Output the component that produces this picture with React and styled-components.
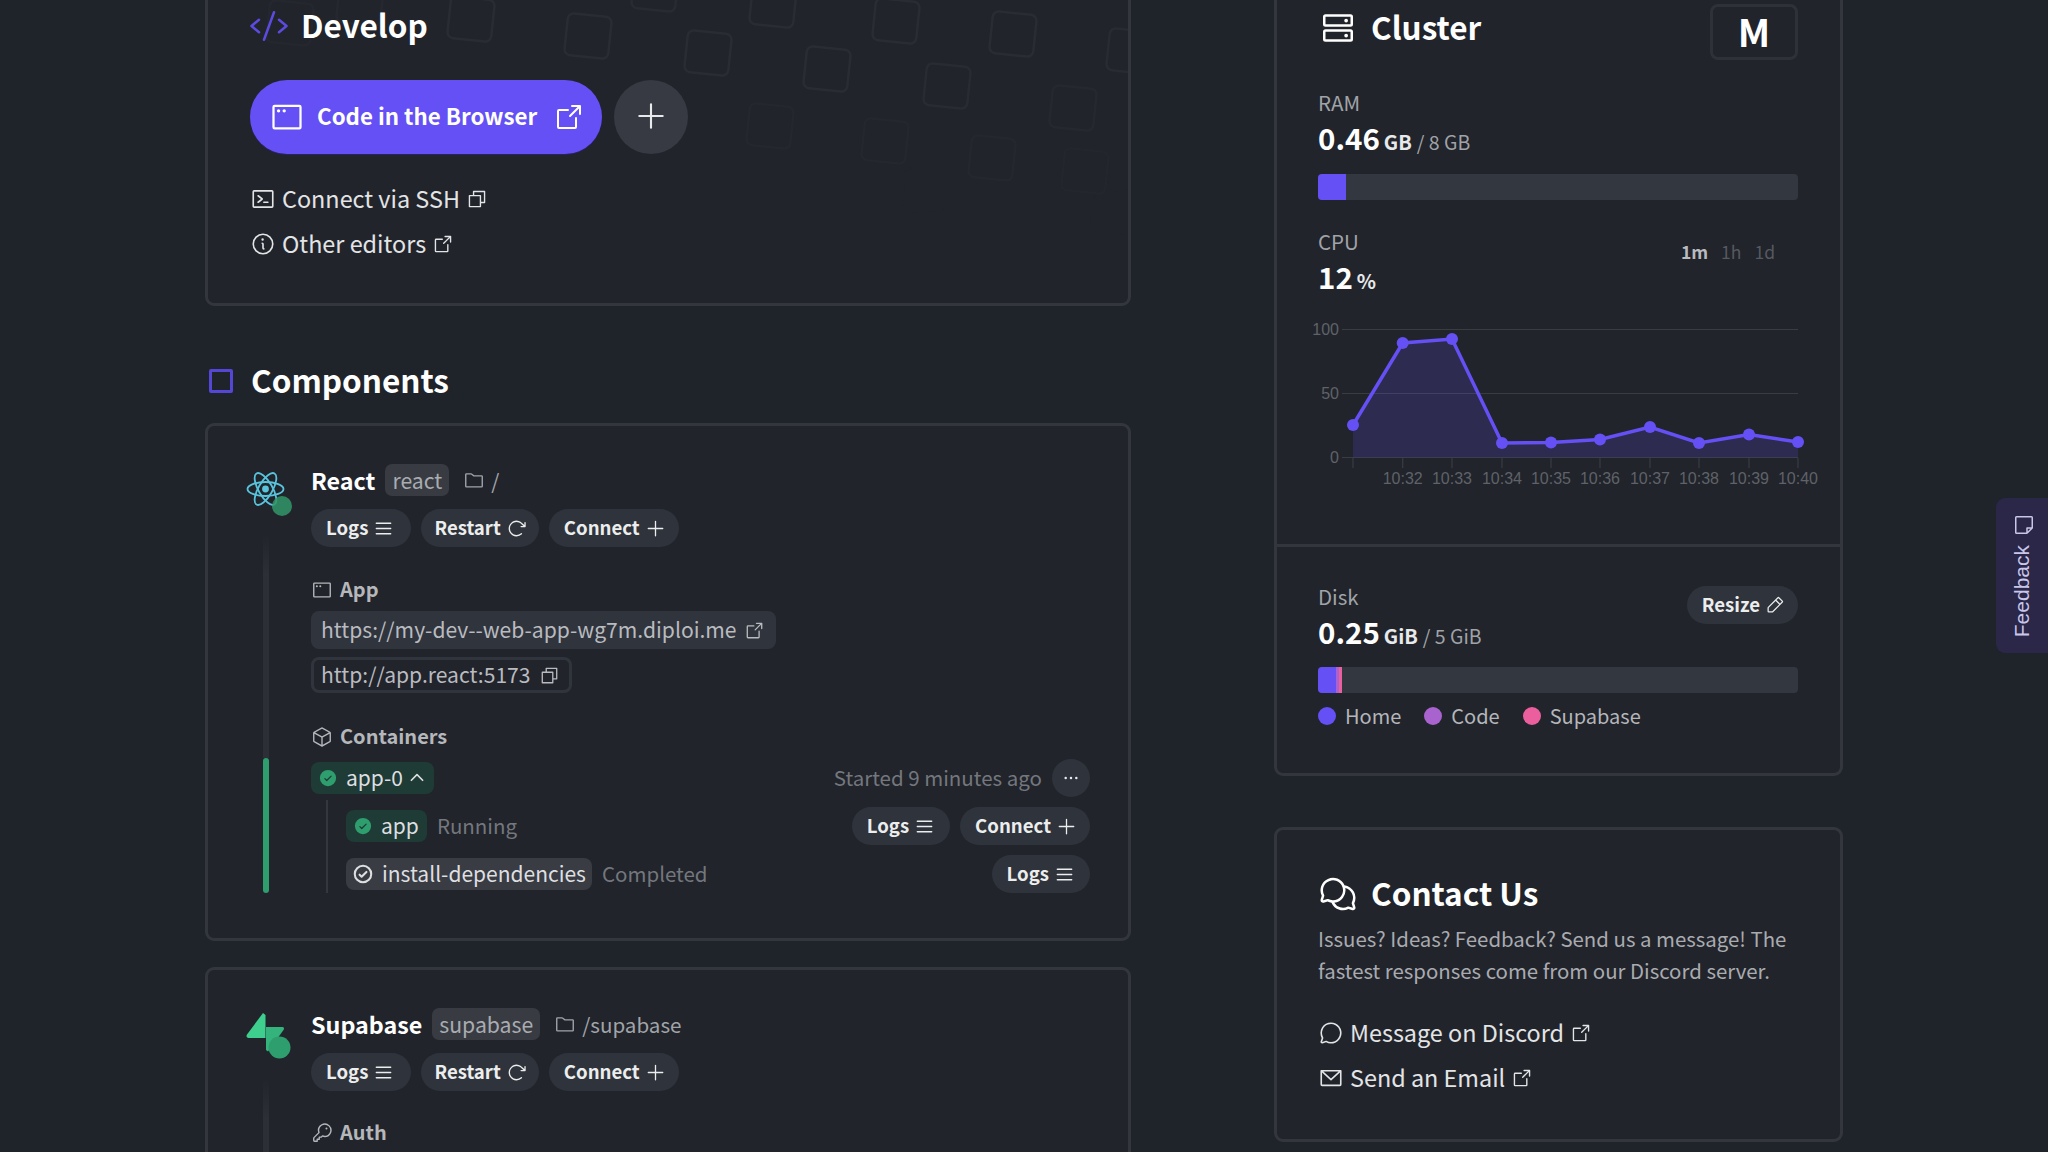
import React from "react";
import styled, { createGlobalStyle } from "styled-components";
import {
  PiCode,
  PiAppWindow,
  PiArrowSquareOut,
  PiPlus,
  PiTerminalWindow,
  PiCopy,
  PiInfo,
  PiFolderSimple,
  PiList,
  PiArrowClockwise,
  PiCube,
  PiCheckCircleFill,
  PiCheckCircleBold,
  PiCaretUpBold,
  PiDotsThreeBold,
  PiKey,
  PiHardDrives,
  PiPencilSimple,
  PiChatsCircle,
  PiChatCircle,
  PiEnvelopeSimple,
  PiNoteBlank,
} from "react-icons/pi";

const GlobalStyle = createGlobalStyle`
  html, body {
    margin: 0;
    height: 100%;
    overflow: hidden;
    background: #1f232a;
  }
  body {
    color: #fff;
    font-family: "Noto Sans CJK SC", "Noto Sans", sans-serif;
  }
  * {
    box-sizing: border-box;
  }
`;

const Viewport = styled.div`
  height: 1152px;
  overflow: hidden;
`;

const Page = styled.div`
  display: flex;
  gap: 143px;
  margin-top: -60px;
  padding-left: 205px;
`;

const LeftColumn = styled.div`
  width: 926px;
  flex: none;
`;

const RightColumn = styled.div`
  width: 569px;
  flex: none;
`;

const Card = styled.section`
  background: #21242b;
  border: 3px solid #33363d;
  border-radius: 9px;
  position: relative;
`;

const DevelopCard = styled(Card)`
  overflow: hidden;
  padding: 63px 42px 42px;
`;

const Pattern = styled.svg`
  position: absolute;
  left: 0;
  top: 57px;
  pointer-events: none;
`;

const CardTitle = styled.h2`
  display: flex;
  align-items: center;
  gap: ${(p) => p.$gap || 12}px;
  height: 40px;
  margin: ${(p) => p.$top || 0}px 0 0;
  padding-bottom: 3px;
  font-size: 31.5px;
  font-weight: 700;
  line-height: 37px;
  position: relative;
  svg {
    flex: none;
    margin: 2px 0 0 ${(p) => p.$iconLeft ?? -1}px;
  }
`;

const ActionRow = styled.div`
  display: flex;
  gap: 12px;
  margin-top: 34px;
  position: relative;
`;

const PrimaryButton = styled.button`
  display: flex;
  align-items: center;
  width: 352px;
  height: 74px;
  padding: 0 17px 0 19px;
  border: 0;
  border-radius: 37px;
  background: #6450f5;
  box-shadow: 0 1px 0 #2a2363;
  color: #fff;
  font: 700 22.3px "Noto Sans CJK SC", sans-serif;
  span {
    flex: 1;
    text-align: left;
    margin: 0 0 5px 12px;
  }
`;

const RoundButton = styled.button`
  display: flex;
  align-items: center;
  justify-content: center;
  width: ${(p) => p.$size || 74}px;
  height: ${(p) => p.$size || 74}px;
  padding: 0 0 ${(p) => (p.$size ? 0 : 2)}px;
  border: 0;
  border-radius: 50%;
  background: ${(p) => p.$bg || "#373a42"};
  color: #e8e9eb;
`;

const LinkList = styled.div`
  display: flex;
  flex-direction: column;
  gap: 11px;
  margin-top: ${(p) => p.$top || 28}px;
  position: relative;
`;

const LinkRow = styled.a`
  display: flex;
  align-items: center;
  gap: 6px;
  height: 34px;
  padding-bottom: 2px;
  font-size: 23.4px;
  color: #e3e4e6;
  svg {
    flex: none;
    margin-top: 2px;
  }
`;

const SectionHeading = styled.h1`
  display: flex;
  align-items: center;
  gap: 18px;
  height: 40px;
  margin: 55px 0 22px 4px;
  font-size: 31.5px;
  font-weight: 700;
  span:last-child {
    margin-bottom: 5px;
  }
`;

const SquareMark = styled.i`
  width: 24px;
  height: 24px;
  border: 3px solid #5546d6;
  border-radius: 2px;
`;

const ComponentCard = styled(Card)`
  display: flex;
  margin-bottom: 26px;
  min-height: ${(p) => p.$minHeight || 0}px;
  padding: 38px 38px 45px 40px;
`;

const Rail = styled.div`
  display: flex;
  flex: none;
  flex-direction: column;
  width: 63px;
`;

const LogoBox = styled.div`
  position: relative;
  width: 44px;
  height: 46px;
  flex: none;
  margin-left: -2px;
`;

const StatusDot = styled.span`
  position: absolute;
  left: 26px;
  top: 32px;
  width: 20px;
  height: 20px;
  border-radius: 50%;
  background: rgba(49, 150, 104, 0.85);
`;

const RailLine = styled.div`
  flex: 1;
  width: 6px;
  margin: 24px 0 0 15px;
  background: linear-gradient(to bottom, #21242b, #2c2f36 40px);
`;

const RailActive = styled.div`
  height: 135px;
  width: 6px;
  margin-left: 15px;
  border-radius: 3px;
  background: #2f9e6e;
`;

const Body = styled.div`
  flex: 1;
  min-width: 0;
`;

const TitleRow = styled.div`
  display: flex;
  align-items: center;
  height: 32px;
`;

const ComponentName = styled.span`
  font-size: 23.3px;
  font-weight: 700;
  margin-right: 10px;
  margin-bottom: 1px;
`;

const NameTag = styled.span`
  display: flex;
  align-items: center;
  height: 32px;
  padding: 0 7px 1px;
  border-radius: 7px;
  background: #383b42;
  color: #a9acb1;
  font-size: 21.2px;
`;

const PathText = styled.span`
  display: flex;
  align-items: center;
  gap: 6px;
  margin-left: 14px;
  color: #a1a4a9;
  font-size: 20.6px;
  padding-bottom: 1px;
  svg {
    margin-top: 1px;
  }
`;

const ButtonRow = styled.div`
  display: flex;
  gap: 10px;
  margin-top: 13px;
`;

const PillButton = styled.button`
  display: flex;
  align-items: center;
  gap: 5px;
  height: 38px;
  margin-top: ${(p) => p.$top || 0}px;
  padding: 0 ${(p) => p.$right || 13}px 4px ${(p) => p.$left || 15}px;
  border: 0;
  border-radius: 20px;
  background: #2f333b;
  color: #eceded;
  font: 700 18.6px "Noto Sans CJK SC", sans-serif;
  svg {
    margin-top: 4px;
  }
`;

const GroupLabel = styled.div`
  display: flex;
  align-items: center;
  gap: 7px;
  height: 30px;
  margin-top: ${(p) => p.$top}px;
  padding-bottom: 3px;
  color: #b5b7bb;
  font-size: 20px;
  font-weight: 700;
  svg {
    margin-top: 3px;
  }
`;

const UrlChip = styled.a`
  display: flex;
  align-items: center;
  gap: ${(p) => (p.$outlined ? 8 : 7)}px;
  width: fit-content;
  margin-top: ${(p) => p.$top}px;
  height: ${(p) => (p.$outlined ? 36 : 38)}px;
  padding: 0 ${(p) => (p.$outlined ? 9 : 11)}px 2px ${(p) => (p.$outlined ? 7 : 10)}px;
  border: ${(p) => (p.$outlined ? "3px solid #30343c" : "0")};
  border-radius: 8px;
  background: ${(p) => (p.$outlined ? "transparent" : "#30343c")};
  color: #b9bbc0;
  font-size: 21.1px;
  svg {
    margin-top: 2px;
  }
`;

const ContainerRow = styled.div`
  display: flex;
  align-items: center;
  height: 38px;
  margin-top: ${(p) => p.$top}px;
`;

const StatusChip = styled.span`
  display: flex;
  align-items: center;
  gap: 8px;
  height: 32px;
  padding: 0 ${(p) => p.$pad || 8}px 2px ${(p) => p.$start || 7}px;
  border-radius: 8px;
  background: ${(p) => (p.$done ? "#393c43" : "#1f3b35")};
  color: #dedfe1;
  font-size: 21px;
  svg {
    flex: none;
    margin-top: 2px;
  }
  svg:nth-child(2) {
    margin-left: -3px;
  }
`;

const MutedText = styled.span`
  color: #74777d;
  font-size: 20.5px;
  margin-left: ${(p) => p.$left || 0}px;
  padding-bottom: 2px;
`;

const RowEnd = styled.div`
  display: flex;
  align-items: center;
  gap: ${(p) => p.$gap || 10}px;
  margin-left: auto;
`;

const StepList = styled.div`
  margin: 3px 0 0 15px;
  padding: 7px 0 0 18px;
  border-left: 2px solid #34373e;
`;

const ClusterCard = styled(Card)`
  margin-bottom: 51px;
`;

const ClusterTop = styled.div`
  padding: 61px 42px 54px 41px;
  border-bottom: 3px solid #33363d;
`;

const ClusterHeader = styled.div`
  display: flex;
  align-items: flex-start;
  justify-content: space-between;
  height: 56px;
`;

const SizeBox = styled.div`
  display: flex;
  align-items: center;
  justify-content: center;
  width: 88px;
  height: 56px;
  border: 3px solid #2e3138;
  border-radius: 8px;
  padding-bottom: 3px;
  font-size: 38px;
  font-weight: 700;
`;

const MetricLabel = styled.div`
  height: 28px;
  margin-top: ${(p) => p.$top || 0}px;
  color: #a0a3a8;
  font-size: 20.5px;
  line-height: 26px;
`;

const MetricValue = styled.div`
  display: flex;
  align-items: baseline;
  height: 36px;
  margin-top: 2px;
  color: #a0a3a8;
  font-size: 19.5px;
  line-height: 36px;
  b {
    color: #fff;
    font-size: 29.5px;
    font-weight: 700;
  }
  strong {
    color: #e8e9ea;
    font-size: 20px;
    font-weight: 700;
    margin: 0 5px 0 4px;
  }
`;

const Meter = styled.div`
  display: flex;
  height: 26px;
  margin-top: ${(p) => p.$top}px;
  overflow: hidden;
  border-radius: 4px;
  background: #33373f;
`;

const MeterFill = styled.div`
  background: ${(p) => p.$color};
`;

const CpuRow = styled.div`
  display: flex;
  justify-content: space-between;
`;

const RangeTabs = styled.div`
  display: flex;
  gap: 13px;
  margin: 51px 23px 0 0;
  height: 0;
  align-items: center;
`;

const RangeTab = styled.span`
  color: ${(p) => (p.$active ? "#b9bbbf" : "#565960")};
  font-size: 17.5px;
  font-weight: ${(p) => (p.$active ? 700 : 400)};
`;

const ChartSvg = styled.svg`
  display: block;
  margin: 6px 0 0 1px;
  overflow: visible;
`;

const ClusterDisk = styled.div`
  padding: 36px 42px 44px 41px;
`;

const DiskHeader = styled.div`
  display: flex;
  align-items: flex-start;
  justify-content: space-between;
`;

const Legend = styled.div`
  display: flex;
  gap: 23px;
  margin-top: 8px;
  height: 28px;
`;

const LegendItem = styled.span`
  display: flex;
  align-items: center;
  gap: 9px;
  color: #b4b6ba;
  font-size: 20px;
  &::before {
    content: "";
    width: 18px;
    height: 18px;
    margin-top: 2px;
    border-radius: 50%;
    background: ${(p) => p.$color};
  }
`;

const ContactCard = styled(Card)`
  padding: 44px 42px 44px 41px;
`;

const ContactText = styled.p`
  margin: 8px 0 0;
  color: #a9abb0;
  font-size: 20.4px;
  line-height: 32px;
`;

const FeedbackTab = styled.div`
  position: fixed;
  right: 0;
  top: 498px;
  display: flex;
  align-items: center;
  justify-content: center;
  gap: 8px;
  width: 52px;
  height: 155px;
  border-radius: 9px 0 0 9px;
  background: #2a2748;
  color: #c9c6ea;
  font: 21px "Liberation Sans", sans-serif;
  writing-mode: vertical-rl;
  span {
    transform: rotate(180deg);
  }
  svg {
    order: -1;
    margin-left: 4px;
  }
`;

const tiles = [
  [446, -2, 0.9], [563, 15, 0.9], [683, 32, 0.9], [802, 48, 0.9], [922, 65, 0.8], [1048, 87, 0.5],
  [748, -16, 0.9], [871, 0, 0.9], [988, 13, 0.9], [1105, 30, 0.8], [630, -32, 0.8], [335, -18, 0.5],
  [967, 137, 0.35], [1060, 150, 0.25], [860, 120, 0.3], [745, 105, 0.3], [620, 90, 0.25],
  [1090, 190, 0.12], [900, 170, 0.12], [265, 2, 0.35],
];

const DevelopPattern = () => (
  <Pattern width="926" height="300" viewBox="205 0 926 300">
    {tiles.map(([x, y, o]) => (
      <rect
        key={`${x}-${y}`}
        x={x}
        y={y}
        width="44"
        height="42"
        rx="6"
        fill="none"
        stroke="#2a2d34"
        strokeWidth="2.5"
        opacity={o}
        transform={`rotate(6 ${x + 22} ${y + 21})`}
      />
    ))}
  </Pattern>
);

const ReactLogo = () => (
  <svg width="40" height="36" viewBox="0 0 40 36" fill="none" stroke="#58c4dc" strokeWidth="1.8" style={{ display: "block", marginTop: 7 }}>
    <circle cx="19.5" cy="18" r="3.4" fill="#58c4dc" stroke="none" />
    <ellipse cx="19.5" cy="18" rx="18" ry="7" />
    <ellipse cx="19.5" cy="18" rx="18" ry="7" transform="rotate(60 19.5 18)" />
    <ellipse cx="19.5" cy="18" rx="18" ry="7" transform="rotate(120 19.5 18)" />
  </svg>
);

const SupabaseLogo = () => (
  <svg width="46" height="48" viewBox="0 0 46 48" style={{ display: "block", marginTop: 4 }}>
    <path d="M17 1 19.5 3V26H2.5C.5 26 0 24 1 22.5Z" fill="#3ecf8e" />
    <path d="M20 15H36.5C38 15 38.5 16.5 37.5 18L22 39.5 20 38Z" fill="#35b37d" />
    <circle cx="33.5" cy="35.5" r="11" fill="#2f9e6e" />
  </svg>
);

const Actions = () => (
  <ButtonRow>
    <PillButton $right={17}>Logs <PiList size={21} /></PillButton>
    <PillButton $left={13} $right={12}>Restart <PiArrowClockwise size={21} /></PillButton>
    <PillButton>Connect <PiPlus size={21} /></PillButton>
  </ButtonRow>
);

const points = [
  [1353, 425], [1402.7, 343], [1452, 339], [1502, 443], [1551, 442.5],
  [1600, 439.5], [1650, 427], [1699, 443], [1749, 434.5], [1798, 442],
];
const times = ["", "10:32", "10:33", "10:34", "10:35", "10:36", "10:37", "10:38", "10:39", "10:40"];

const CpuChart = () => {
  const line = points.map((p) => p.join(",")).join(" ");
  return (
    <ChartSvg width="480" height="190" viewBox="1319 300 480 190" fontFamily="Liberation Sans" fontSize="16" fill="#5f6268">
      {[329.5, 393.5, 457.5].map((y) => (
        <line key={y} x1="1342" x2="1798" y1={y} y2={y} stroke="#3a3c42" strokeWidth="1.2" />
      ))}
      {[["100", 329.5], ["50", 393.5], ["0", 457.5]].map(([t, y]) => (
        <text key={t} x="1339" y={y + 5} textAnchor="end">{t}</text>
      ))}
      <polygon points={`1353,457.5 ${line} 1798,457.5`} fill="#6450f5" fillOpacity="0.18" />
      <polyline points={line} fill="none" stroke="#6450f5" strokeWidth="3.5" />
      {points.map(([x, y], i) => (
        <g key={x}>
          <line x1={x} x2={x} y1="458" y2="468" stroke="#3a3c42" strokeWidth="1.2" />
          <circle cx={x} cy={y} r="6" fill="#6450f5" />
          {times[i] && <text x={x} y="484" textAnchor="middle">{times[i]}</text>}
        </g>
      ))}
    </ChartSvg>
  );
};

export default function App() {
  return (
    <Viewport>
      <GlobalStyle />
      <Page>
        <LeftColumn>
          <DevelopCard>
            <DevelopPattern />
            <CardTitle>
              <PiCode size={40} color="#5b4be0" /> Develop
            </CardTitle>
            <ActionRow>
              <PrimaryButton>
                <PiAppWindow size={36} />
                <span>Code in the Browser</span>
                <PiArrowSquareOut size={32} />
              </PrimaryButton>
              <RoundButton><PiPlus size={34} /></RoundButton>
            </ActionRow>
            <LinkList>
              <LinkRow><PiTerminalWindow size={26} /> Connect via SSH <PiCopy size={22} /></LinkRow>
              <LinkRow><PiInfo size={26} /> Other editors <PiArrowSquareOut size={22} /></LinkRow>
            </LinkList>
          </DevelopCard>

          <SectionHeading><SquareMark /><span>Components</span></SectionHeading>

          <ComponentCard>
            <Rail>
              <LogoBox><ReactLogo /><StatusDot /></LogoBox>
              <RailLine />
              <RailActive />
            </Rail>
            <Body>
              <TitleRow>
                <ComponentName>React</ComponentName>
                <NameTag>react</NameTag>
                <PathText><PiFolderSimple size={22} /> /</PathText>
              </TitleRow>
              <Actions />
              <GroupLabel $top={28}><PiAppWindow size={22} /> App</GroupLabel>
              <UrlChip $top={6}>https://my-dev--web-app-wg7m.diploi.me <PiArrowSquareOut size={21} /></UrlChip>
              <UrlChip $top={8} $outlined>http://app.react:5173 <PiCopy size={21} /></UrlChip>
              <GroupLabel $top={29}><PiCube size={22} /> Containers</GroupLabel>
              <ContainerRow $top={7}>
                <StatusChip>
                  <PiCheckCircleFill size={20} color="#2f9e6e" /> app-0 <PiCaretUpBold size={18} />
                </StatusChip>
                <RowEnd>
                  <MutedText>Started 9 minutes ago</MutedText>
                  <RoundButton $size={38} $bg="#2f333b"><PiDotsThreeBold size={20} /></RoundButton>
                </RowEnd>
              </ContainerRow>
              <StepList>
                <ContainerRow $top={0}>
                  <StatusChip><PiCheckCircleFill size={20} color="#2f9e6e" /> app</StatusChip>
                  <MutedText $left={10}>Running</MutedText>
                  <RowEnd>
                    <PillButton $right={15}>Logs <PiList size={21} /></PillButton>
                    <PillButton>Connect <PiPlus size={21} /></PillButton>
                  </RowEnd>
                </ContainerRow>
                <ContainerRow $top={10}>
                  <StatusChip $done $pad={6} $start={6}><PiCheckCircleBold size={22} /> install-dependencies</StatusChip>
                  <MutedText $left={10}>Completed</MutedText>
                  <RowEnd>
                    <PillButton $right={15}>Logs <PiList size={21} /></PillButton>
                  </RowEnd>
                </ContainerRow>
              </StepList>
            </Body>
          </ComponentCard>

          <ComponentCard $minHeight={400}>
            <Rail>
              <LogoBox><SupabaseLogo /></LogoBox>
              <RailLine />
            </Rail>
            <Body>
              <TitleRow>
                <ComponentName>Supabase</ComponentName>
                <NameTag>supabase</NameTag>
                <PathText><PiFolderSimple size={22} /> /supabase</PathText>
              </TitleRow>
              <Actions />
              <GroupLabel $top={27}><PiKey size={22} /> Auth</GroupLabel>
            </Body>
          </ComponentCard>
        </LeftColumn>

        <RightColumn>
          <ClusterCard>
            <ClusterTop>
              <ClusterHeader>
                <CardTitle $top={4} $gap={13} $iconLeft={0}><PiHardDrives size={40} /> Cluster</CardTitle>
                <SizeBox>M</SizeBox>
              </ClusterHeader>
              <MetricLabel $top={29}>RAM</MetricLabel>
              <MetricValue><b>0.46</b><strong>GB</strong>/ 8 GB</MetricValue>
              <Meter $top={19}><MeterFill $color="#6450f5" style={{ width: 28 }} /></Meter>
              <CpuRow>
                <div>
                  <MetricLabel $top={28}>CPU</MetricLabel>
                  <MetricValue><b>12</b><strong>%</strong></MetricValue>
                </div>
                <RangeTabs>
                  <RangeTab $active>1m</RangeTab>
                  <RangeTab>1h</RangeTab>
                  <RangeTab>1d</RangeTab>
                </RangeTabs>
              </CpuRow>
              <CpuChart />
            </ClusterTop>
            <ClusterDisk>
              <DiskHeader>
                <div>
                  <MetricLabel>Disk</MetricLabel>
                  <MetricValue><b>0.25</b><strong>GiB</strong>/ 5 GiB</MetricValue>
                </div>
                <PillButton $top={3}>Resize <PiPencilSimple size={20} /></PillButton>
              </DiskHeader>
              <Meter $top={18}>
                <MeterFill $color="#6450f5" style={{ width: 18 }} />
                <MeterFill $color="#a963cf" style={{ width: 3 }} />
                <MeterFill $color="#ec5f9e" style={{ width: 3 }} />
              </Meter>
              <Legend>
                <LegendItem $color="#6450f5">Home</LegendItem>
                <LegendItem $color="#a963cf">Code</LegendItem>
                <LegendItem $color="#ec5f9e">Supabase</LegendItem>
              </Legend>
            </ClusterDisk>
          </ClusterCard>

          <ContactCard>
            <CardTitle $gap={13} $iconLeft={0}><PiChatsCircle size={40} /> Contact Us</CardTitle>
            <ContactText>
              Issues? Ideas? Feedback? Send us a message! The fastest responses come from our Discord server.
            </ContactText>
            <LinkList $top={30}>
              <LinkRow><PiChatCircle size={26} /> Message on Discord <PiArrowSquareOut size={22} /></LinkRow>
              <LinkRow><PiEnvelopeSimple size={26} /> Send an Email <PiArrowSquareOut size={22} /></LinkRow>
            </LinkList>
          </ContactCard>
        </RightColumn>
      </Page>
      <FeedbackTab>
        <span>Feedback</span>
        <PiNoteBlank size={24} />
      </FeedbackTab>
    </Viewport>
  );
}
